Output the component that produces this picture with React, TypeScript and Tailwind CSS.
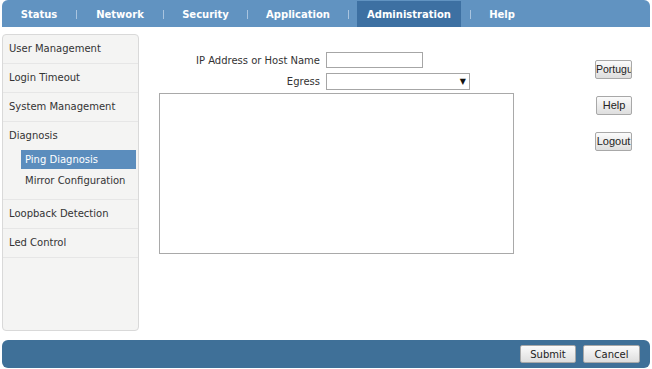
const tabs = [
  { label: 'Status', w: 'w-[74px]' },
  { label: 'Network', w: 'w-[86px]' },
  { label: 'Security', w: 'w-[83px]' },
  { label: 'Application', w: 'w-[100px]' },
]

function Sep() {
  return <div className="h-[9px] w-px bg-[#a9c4df]" />
}

function SideItem({ children }: { children: React.ReactNode }) {
  return (
    <div className="flex h-[29px] items-center border-b border-[#e6e6e6] pb-px pl-[6px] text-[10px] text-[#333]">
      {children}
    </div>
  )
}

function GrayButton({ children, className = '' }: { children: React.ReactNode; className?: string }) {
  return (
    <button
      className={`flex items-center overflow-hidden whitespace-nowrap rounded-[2px] border border-[#a8a8a8] bg-gradient-to-b from-[#fbfbfb] to-[#dedede] text-[#222] ${className}`}
    >
      {children}
    </button>
  )
}

export default function App() {
  return (
    <div className="h-[369px] w-[652px] overflow-hidden bg-white font-['DejaVu_Sans',sans-serif]">
      {/* top nav */}
      <div className="mx-[2px] flex h-[27px] items-center rounded-t-[6px] bg-[#6193c1] pt-px text-[10px] font-bold text-white">
        {tabs.map((t) => (
          <div key={t.label} className="flex h-full items-center">
            <div className={`${t.w} text-center`}>{t.label}</div>
            <Sep />
          </div>
        ))}
        <div className="ml-[8px] flex h-full w-[104px] items-center justify-center bg-[#3d70a2]">
          Administration
        </div>
        <div className="ml-[9px]">
          <Sep />
        </div>
        <div className="w-[62px] text-center">Help</div>
      </div>

      <div className="mt-[7px] flex">
        {/* sidebar */}
        <div className="ml-[2px] h-[297px] w-[137px] rounded-[4px] border border-[#d9d9d9] bg-[#f4f4f3]">
          <SideItem>User Management</SideItem>
          <SideItem>Login Timeout</SideItem>
          <SideItem>System Management</SideItem>
          <div className="border-b border-[#e6e6e6] pb-[8px] text-[10px] text-[#333]">
            <div className="flex h-[27px] items-center pb-px pl-[6px]">Diagnosis</div>
            <div className="mr-[2px] ml-[18px] mt-[1px] flex h-[19px] items-center bg-[#5b8dbd] pl-[4px] text-white">
              Ping Diagnosis
            </div>
            <div className="ml-[22px] flex h-[22px] items-center">Mirror Configuration</div>
          </div>
          <SideItem>Loopback Detection</SideItem>
          <SideItem>Led Control</SideItem>
        </div>

        {/* main form */}
        <div className="ml-[20px] w-[355px] pt-[18px] text-[10px] text-[#333]">
          <div className="flex h-[16px] items-center">
            <div className="w-[161px] text-right">IP Address or Host Name</div>
            <div className="ml-[6px] h-[16px] w-[97px] border border-[#a6a6a6] bg-white" />
          </div>
          <div className="mt-[5px] flex h-[17px] items-center">
            <div className="w-[161px] text-right">Egress</div>
            <div className="ml-[6px] flex h-[17px] w-[144px] items-center justify-end border border-[#a6a6a6] bg-white pr-[3px] text-[8px] text-[#111]">
              ▼
            </div>
          </div>
          <div className="mt-[3px] h-[161px] w-[355px] border border-[#a9a9a9] bg-white" />
        </div>

        {/* side buttons */}
        <div className="ml-[81px] flex flex-col gap-[17px] pt-[26px] font-['Liberation_Sans',sans-serif] text-[11px]">
          <GrayButton className="h-[19px] w-[37px] justify-start text-[10.5px]">Português</GrayButton>
          <GrayButton className="ml-[1px] h-[19px] w-[36px] justify-center">Help</GrayButton>
          <GrayButton className="h-[19px] w-[37px] justify-center">Logout</GrayButton>
        </div>
      </div>

      {/* bottom bar */}
      <div className="mx-[2px] mt-[9px] flex h-[28px] items-center justify-end gap-[7px] rounded-[6px] bg-[#3f7098] pr-[10px] text-[10px]">
        <GrayButton className="h-[18px] w-[56px] justify-center">Submit</GrayButton>
        <GrayButton className="h-[18px] w-[57px] justify-center">Cancel</GrayButton>
      </div>
    </div>
  )
}
